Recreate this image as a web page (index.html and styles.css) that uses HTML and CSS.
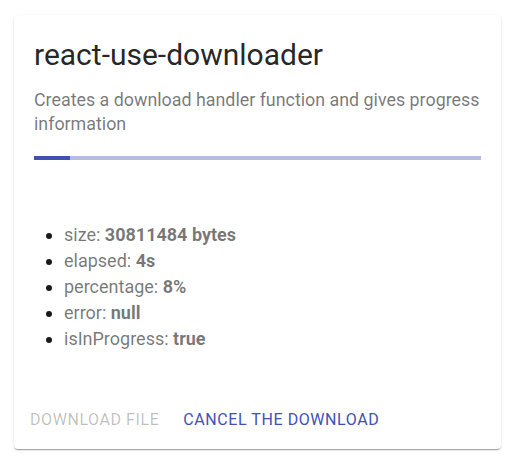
FILE: index.html
```html
<!DOCTYPE html>
<html>
<head>
<meta charset="utf-8">
<link rel="stylesheet" href="styles.css">
</head>
<body>
<div class="card">
  <div class="content">
    <h2 class="title">react-use-downloader</h2>
    <p class="subtitle">Creates a download handler function and gives progress information</p>
    <div class="progress"><div class="bar" style="width: 8%"></div></div>
    <ul class="stats">
      <li>size: <b>30811484 bytes</b></li>
      <li>elapsed: <b>4s</b></li>
      <li>percentage: <b>8%</b></li>
      <li>error: <b>null</b></li>
      <li>isInProgress: <b>true</b></li>
    </ul>
  </div>
  <div class="actions">
    <button class="btn disabled" disabled>Download file</button>
    <button class="btn primary">Cancel the download</button>
  </div>
</div>
</body>
</html>
```
FILE: styles.css
```css
html, body {
  margin: 0;
  padding: 0;
  background: #fff;
  font-family: Roboto, "Helvetica", Arial, sans-serif;
}
body {
  padding: 15px 17px 17px 14px;
}
.card {
  width: 487px;
  background: #fff;
  border-radius: 4px;
  box-shadow: 0px 2px 1px -1px rgba(0,0,0,0.2), 0px 1px 1px 0px rgba(0,0,0,0.14), 0px 1px 3px 0px rgba(0,0,0,0.12);
  overflow: hidden;
}
.content {
  padding: 22px 20px 42px 20px;
}
.title {
  margin: 0;
  font-size: 30px;
  font-weight: 400;
  line-height: 36px;
  color: rgba(0,0,0,0.87);
}
.subtitle {
  margin: 15px 0 0 0;
  font-size: 17.85px;
  line-height: 24px;
  color: rgba(0,0,0,0.54);
}
.progress {
  margin-top: 20px;
  height: 4px;
  background: #b6bce2;
  overflow: hidden;
}
.bar {
  height: 100%;
  background: #3f51b5;
}
.stats {
  margin: 62px 0 0 0;
  padding-left: 30px;
  font-size: 18px;
  line-height: 26px;
  color: rgba(0,0,0,0.54);
}
.stats li::marker {
  color: #1a1a1a;
}
.stats b {
  font-weight: 700;
}
.actions {
  display: flex;
  align-items: center;
  padding: 8px 8px 10px 8px;
  gap: 8px;
}
.btn {
  font-family: Roboto, "Helvetica", Arial, sans-serif;
  font-size: 16px;
  font-weight: 400;
  line-height: 24.5px;
  letter-spacing: 0.57px;
  text-transform: uppercase;
  padding: 6px 8px;
  min-width: 64px;
  border: 0;
  background: transparent;
  border-radius: 4px;
  cursor: pointer;
}
.disabled {
  color: rgba(0,0,0,0.26);
}
.primary {
  color: #3f51b5;
}
```
